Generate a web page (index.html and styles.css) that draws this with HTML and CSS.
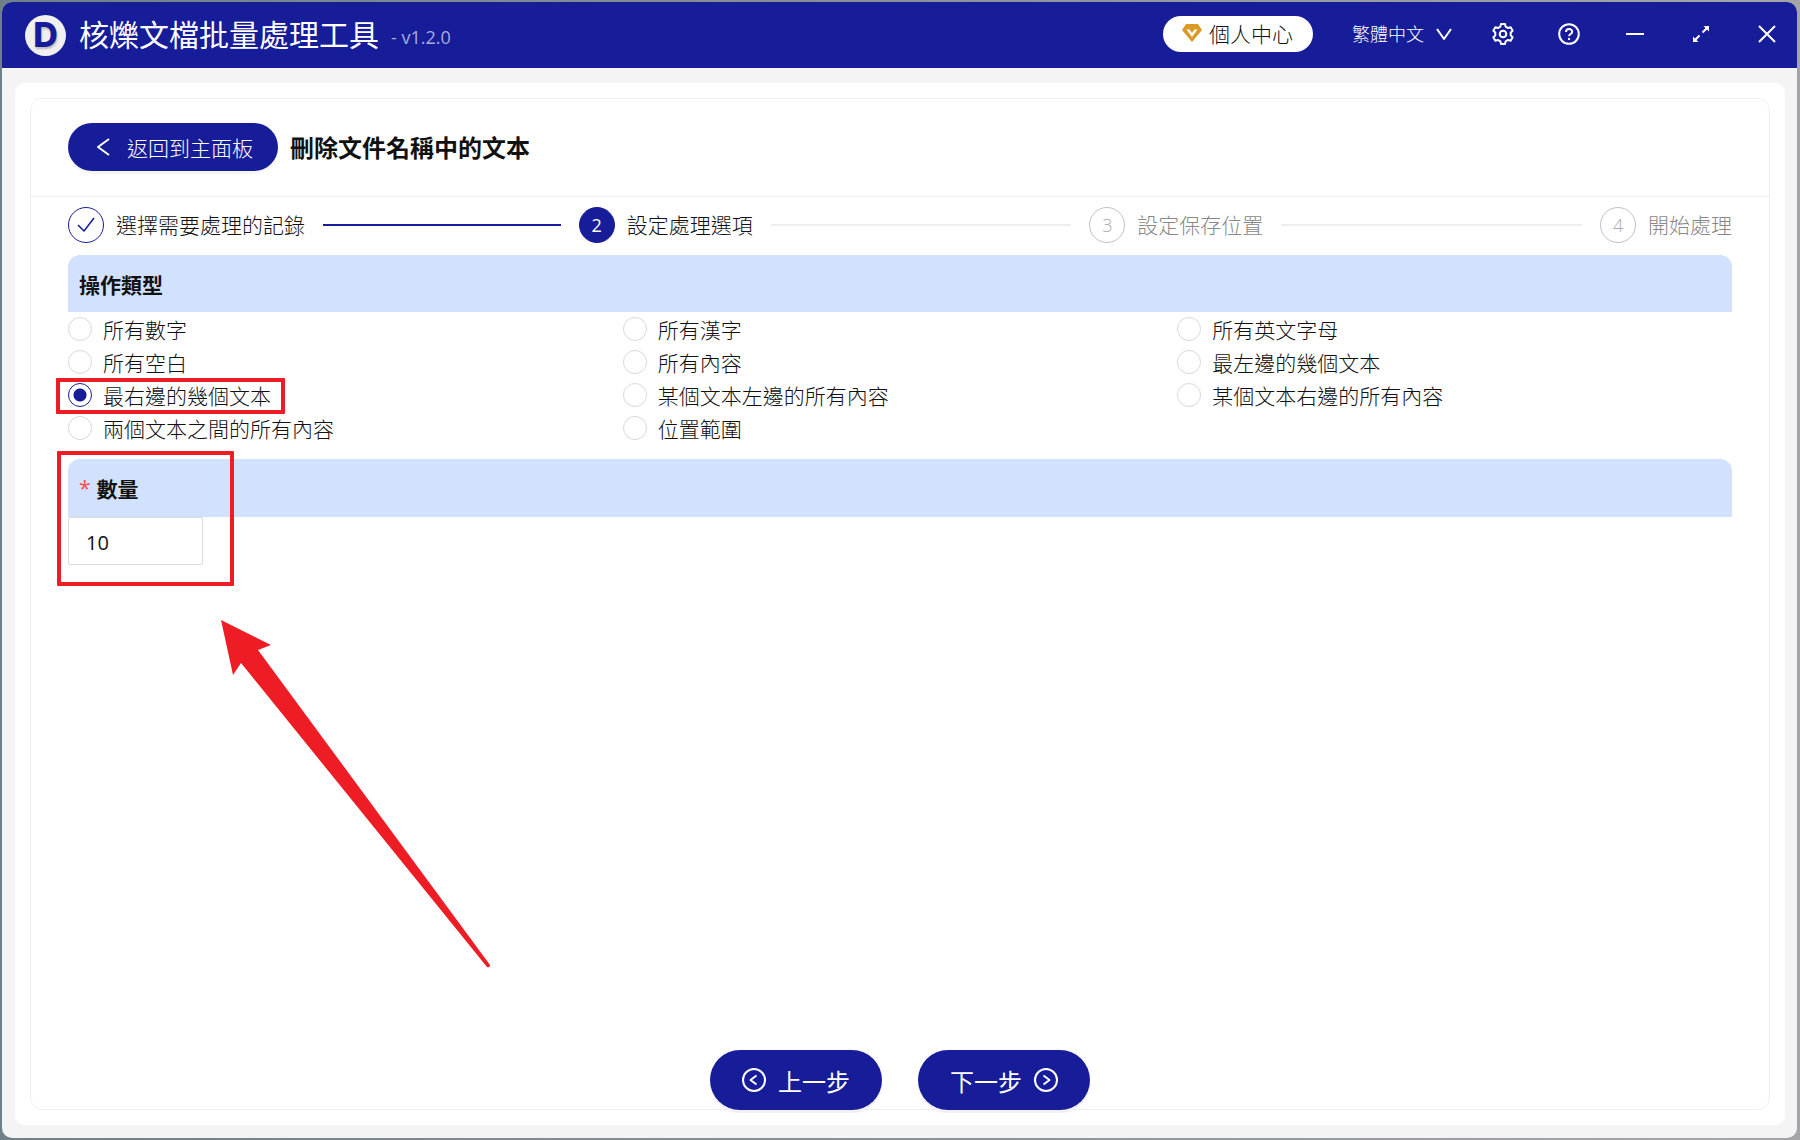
FILE: index.html
```html
<!DOCTYPE html>
<html lang="zh-Hant">
<head>
    <meta charset="UTF-8">
    <meta name="viewport" content="width=device-width, initial-scale=1.0">
    <title>核爍文檔批量處理工具</title>
    <link rel="stylesheet" href="styles.css">
</head>
<body>
    <div class="window">
        <!-- Title bar -->
        <header class="titlebar">
            <div class="logo">D</div>
            <h1 class="app-name">核爍文檔批量處理工具</h1>
            <span class="version">- v1.2.0</span>

            <div class="tools">
                <button type="button" class="account">
                    <svg width="22" height="20" viewBox="0 0 22 20">
                        <path fill="#d99a26" fill-rule="evenodd" d="M5 1h12l4 6-10 12L1 7zM5.500 6.500L11 14l5.500-7.500h-3L11 10 8.500 6.500z"/>
                    </svg>
                    個人中心
                </button>
                <label class="language">
                    <select aria-label="語言">
                        <option>繁體中文</option>
                        <option>English</option>
                    </select>
                    <svg width="16" height="12" viewBox="0 0 16 12"><path d="M1 1l7 10 7-10"/></svg>
                </label>
                <button type="button" class="tool" aria-label="設定">
                    <svg width="22" height="22" viewBox="-11 -11 22 22">
                        <path d="M-2-10H2L2.600-7.400 5.100-5.950 7.660-6.730 9.660-3.270 7.710-1.450V1.450L9.660 3.270 7.660 6.730 5.100 5.950 2.600 7.400 2 10H-2L-2.600 7.400-5.100 5.950-7.660 6.730-9.660 3.270-7.710 1.450V-1.450L-9.660-3.270-7.660-6.730-5.100-5.950-2.600-7.400z"/>
                        <circle r="3.300"/>
                    </svg>
                </button>
                <button type="button" class="tool" aria-label="說明">
                    <svg width="22" height="22" viewBox="0 0 22 22">
                        <circle cx="11" cy="11" r="9.800"/>
                        <path d="M8 9c0-4 6.200-4 6.200-.2 0 2.400-3.200 2-3.200 4.400"/>
                        <path d="M11 15v2"/>
                    </svg>
                </button>
                <button type="button" class="tool" aria-label="最小化">
                    <svg width="22" height="22" viewBox="0 0 22 22"><path d="M2 11h18"/></svg>
                </button>
                <button type="button" class="tool" aria-label="最大化">
                    <svg width="22" height="22" viewBox="0 0 22 22">
                        <path d="M12.500 9.500L18 4M9.500 12.500L4 18"/>
                        <path class="solid" d="M13.500 3H19v5.500zM8.500 19H3v-5.500z"/>
                    </svg>
                </button>
                <button type="button" class="tool" aria-label="關閉">
                    <svg width="22" height="22" viewBox="0 0 22 22"><path d="M3 3l16 16M19 3L3 19"/></svg>
                </button>
            </div>
        </header>

        <main class="panel">
            <div class="card">
                <div class="card-head">
                    <button type="button" class="back">
                        <svg width="14" height="18" viewBox="0 0 14 18"><path d="M12 1L1 9l11 8"/></svg>
                        返回到主面板
                    </button>
                    <h2>刪除文件名稱中的文本</h2>
                </div>

                <div class="card-body">
                    <ol class="steps">
                        <li class="step done">
                            <span class="step-icon">
                                <svg width="18" height="16" viewBox="0 0 18 16"><path d="M1 8l6 6L17 1"/></svg>
                            </span>
                            <span class="step-title">選擇需要處理的記錄</span>
                        </li>
                        <li class="step current">
                            <span class="step-icon">2</span>
                            <span class="step-title">設定處理選項</span>
                        </li>
                        <li class="step">
                            <span class="step-icon">3</span>
                            <span class="step-title">設定保存位置</span>
                        </li>
                        <li class="step">
                            <span class="step-icon">4</span>
                            <span class="step-title">開始處理</span>
                        </li>
                    </ol>

                    <!-- Operation type -->
                    <section>
                        <h3 class="band">操作類型</h3>
                        <div class="options">
                            <label><input type="radio" name="type">所有數字</label>
                            <label><input type="radio" name="type">所有漢字</label>
                            <label><input type="radio" name="type">所有英文字母</label>
                            <label><input type="radio" name="type">所有空白</label>
                            <label><input type="radio" name="type">所有內容</label>
                            <label><input type="radio" name="type">最左邊的幾個文本</label>
                            <label class="marked"><input type="radio" name="type" checked>最右邊的幾個文本</label>
                            <label><input type="radio" name="type">某個文本左邊的所有內容</label>
                            <label><input type="radio" name="type">某個文本右邊的所有內容</label>
                            <label><input type="radio" name="type">兩個文本之間的所有內容</label>
                            <label><input type="radio" name="type">位置範圍</label>
                        </div>
                    </section>

                    <!-- Amount -->
                    <section class="amount">
                        <h3 class="band"><span class="required">*</span><label for="count">數量</label></h3>
                        <input type="text" id="count" class="count" value="10">
                        <div class="mark"></div>
                        <svg class="arrow" width="270" height="348" viewBox="0 0 270 348">
                            <path d="M0 0l50 25-13 5 232 315q0 3-3 2L20 43l-8 12z"/>
                        </svg>
                    </section>
                </div>

                <div class="actions">
                    <button type="button">
                        <svg width="24" height="24" viewBox="0 0 24 24"><circle cx="12" cy="12" r="11"/><path d="M14.500 7.500L8.500 12l6 4.500"/></svg>
                        上一步
                    </button>
                    <button type="button">
                        下一步
                        <svg width="24" height="24" viewBox="0 0 24 24"><circle cx="12" cy="12" r="11"/><path d="M9.500 7.500l6 4.500-6 4.500"/></svg>
                    </button>
                </div>
            </div>
        </main>
    </div>
</body>
</html>
```

FILE: styles.css
```css
* {
    box-sizing: border-box;
}
body {
    margin: 0;
    padding: 2px 3px 2px 2px;
    height: 100vh;
    background: linear-gradient(to right, #6f8089, #a5a5a8);
    font-family: "Open Sans", "Noto Sans CJK TC", sans-serif;
    font-weight: 300;
    font-size: 21px;
    color: #111;
}
button, input, select {
    font: inherit;
    color: inherit;
}
button {
    border: none;
    cursor: pointer;
}
h1, h2, h3 {
    margin: 0;
}
svg {
    flex: none;
    fill: none;
    stroke: currentColor;
    stroke-width: 2;
    stroke-linejoin: round;
}
.window {
    display: flex;
    flex-direction: column;
    height: 100%;
    background: #f4f4f4;
    border-radius: 10px;
    overflow: hidden;
}

/* Title bar */
.titlebar {
    display: flex;
    align-items: center;
    height: 66px;
    padding: 0 19px 0 23px;
    background: #171c98;
    color: #fff;
}
.logo {
    width: 41px;
    height: 41px;
    margin-right: 13px;
    border-radius: 50%;
    background: #f0f0f0;
    color: #171c98;
    font-family: Inter, sans-serif;
    font-size: 34px;
    font-weight: 800;
    line-height: 40px;
    text-align: center;
    text-shadow: 1px 2px 2px #bbb;
}
.app-name {
    font-size: 30px;
    font-weight: 400;
    line-height: 40px;
}
.version {
    margin-left: 12px;
    padding-top: 3px;
    color: #a9abdb;
    font-size: 18px;
    font-weight: 400;
}
.tools {
    display: flex;
    align-items: center;
    gap: 44px;
    margin-left: auto;
    padding-bottom: 2px;
}
.account {
    display: flex;
    align-items: center;
    gap: 6px;
    height: 36px;
    padding: 0 20px 2px 18px;
    margin-right: -5px;
    border-radius: 18px;
    background: #fff;
    color: #111;
}
.account svg {
    stroke: none;
}
.language {
    display: flex;
    align-items: center;
    gap: 12px;
    margin-right: -4px;
}
.language select {
    appearance: none;
    padding: 0;
    border: none;
    background: none;
    font-size: 18px;
}
.language option {
    color: #111;
}
.tool {
    display: flex;
    padding: 0;
    background: none;
}
.tool .solid {
    fill: currentColor;
    stroke: none;
}

/* Content */
.panel {
    display: flex;
    flex: 1;
    margin: 15px 12px 13px 13px;
    padding: 15px;
    border-radius: 10px;
    background: #fff;
}
.card {
    display: flex;
    flex-direction: column;
    flex: 1;
    border: 1px solid #eee;
    border-radius: 12px;
}
.card-head {
    display: flex;
    align-items: center;
    gap: 12px;
    height: 98px;
    padding: 0 37px 2px;
    border-bottom: 1px solid #eee;
}
.card-head h2 {
    font-size: 24px;
    font-weight: 700;
}
.back {
    display: flex;
    align-items: center;
    gap: 16px;
    height: 48px;
    padding: 0 25px 0 29px;
    border-radius: 24px;
    background: #171c98;
    box-shadow: 0 3px 0 #f6f6f6;
    color: #fff;
}
.card-body {
    flex: 1;
    padding: 10px 37px 0;
}

.steps {
    display: flex;
    gap: 18px;
    margin: 0 0 12px;
    padding: 0;
    list-style: none;
}
.step {
    display: flex;
    align-items: center;
    flex: 1 1 0;
    color: #888;
    white-space: nowrap;
}
.step:last-child {
    flex: none;
}
.step:not(:last-child)::after {
    content: "";
    flex: 1;
    height: 2px;
    margin-left: 18px;
    background: #eee;
}
.step-icon {
    display: flex;
    align-items: center;
    justify-content: center;
    width: 36px;
    height: 36px;
    margin-right: 12px;
    border: 1px solid #bfbfc9;
    border-radius: 50%;
    color: #aaa;
    font-size: 18px;
}
.step-icon svg {
    stroke-width: 1.5;
}
.step-title {
    line-height: 36px;
}
.done, .current {
    color: #111;
}
.done .step-icon {
    border-color: #171c98;
    color: #171c98;
}
.step.done::after {
    background: #171c98;
}
.current .step-icon {
    border-color: #171c98;
    background: #171c98;
    color: #fff;
    font-weight: 400;
}

.band {
    display: flex;
    align-items: center;
    gap: 6px;
    height: 57px;
    padding: 0 11px;
    border-radius: 12px 12px 0 0;
    background: #d2e2fe;
    font-size: 21px;
    font-weight: 700;
}
.required {
    color: #ff4d4f;
    font-weight: 400;
}
.options {
    display: grid;
    grid-template-columns: repeat(3, 1fr);
    padding-bottom: 15px;
}
.options label {
    display: flex;
    align-items: center;
    justify-self: start;
    height: 33px;
}
.options input {
    appearance: none;
    width: 24px;
    height: 24px;
    margin: 0 11px 0 0;
    border: 1px solid #d9d9d9;
    border-radius: 50%;
    background: #fff;
}
.options input:checked {
    border-color: #171c98;
    background: radial-gradient(circle, #171c98 6px, #fff 7px);
}
.amount .band {
    height: 58px;
}
.count {
    display: block;
    width: 135px;
    height: 48px;
    padding: 2px 17px 0;
    border: 1px solid #d9d9d9;
    border-radius: 2px;
    font-size: 20px;
    font-weight: 400;
}

/* Red callouts */
.marked, .amount {
    position: relative;
}
.marked::after {
    content: "";
    position: absolute;
    inset: 0 -14px -3px -12px;
    border: 4px solid #ee1c25;
    border-radius: 1px;
}
.mark {
    position: absolute;
    top: -8px;
    left: -11px;
    width: 177px;
    height: 135px;
    border: 4px solid #ee1c25;
    border-radius: 1px;
    pointer-events: none;
}
.arrow {
    position: absolute;
    top: 161px;
    left: 153px;
    fill: #ee1c25;
    stroke: none;
    pointer-events: none;
}

.actions {
    display: flex;
    justify-content: center;
    gap: 36px;
    margin-bottom: -1px;
}
.actions button {
    display: flex;
    align-items: center;
    gap: 12px;
    height: 60px;
    padding: 0 32px;
    border-radius: 30px;
    background: #171c98;
    box-shadow: 0 3px 0 #f1f1f5;
    color: #fff;
    font-size: 24px;
    font-weight: 400;
}
```
